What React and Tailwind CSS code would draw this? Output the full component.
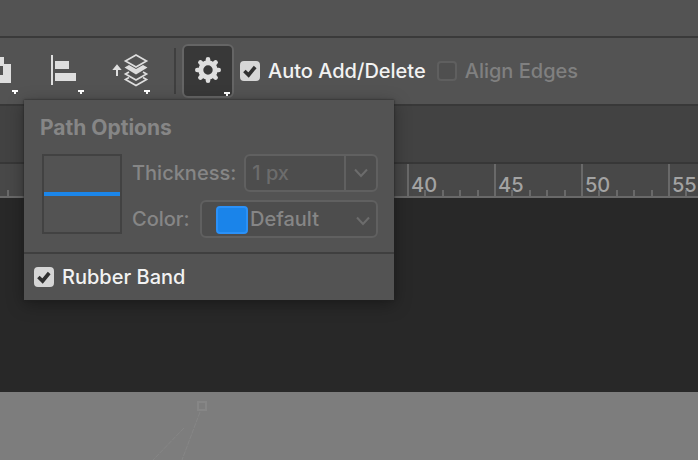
import { useState } from "react";

const rulerMarks = [
  { at: 15 },
  { at: 20 },
  { at: 25 },
  { at: 30 },
  { at: 35 },
  { at: 40, label: "40" },
  { at: 45, label: "45" },
  { at: 50, label: "50" },
  { at: 55, label: "55" },
];

const CheckBox = ({ id, label, checked, onChange, disabled }) => (
  <div className="flex shrink-0 items-center gap-2">
    <span className="relative flex h-5 w-5">
      <input
        id={id}
        type="checkbox"
        checked={checked}
        onChange={onChange}
        disabled={disabled}
        className="h-5 w-5 appearance-none rounded border-2 border-[#5f5f5f] bg-[#4f4f4f] checked:border-[#d6d6d6] checked:bg-[#d6d6d6]"
      />
      {checked && (
        <svg
          className="pointer-events-none absolute inset-0"
          width="20"
          height="20"
          viewBox="0 0 20 20"
          fill="none"
          stroke="#303030"
          strokeWidth="3.6"
        >
          <path d="M4.4 10L8.6 14L15.2 6" />
        </svg>
      )}
    </span>
    <label
      htmlFor={id}
      className={`whitespace-nowrap ${
        disabled ? "text-[#808080]" : "text-[#f2f2f2]"
      }`}
    >
      {label}
    </label>
  </div>
);

const Chevron = () => (
  <svg
    width="14"
    height="10"
    viewBox="0 0 14 10"
    fill="none"
    stroke="#6c6c6c"
    strokeWidth="2"
  >
    <path d="M1 1.5L7 8L13 1.5" />
  </svg>
);

const Ruler = () => (
  <div className="h-[34px] overflow-hidden border-b-2 border-[#696969] bg-[#484848]">
    <div className="-ml-7 flex h-full">
      {rulerMarks.map(({ at, label }) => (
        <div
          key={at}
          className="relative grid w-[87px] shrink-0 grid-cols-5 items-end"
        >
          <span className="h-full w-0.5 bg-[#696969]" />
          <span className="h-1.5 w-0.5 bg-[#696969]" />
          <span className="h-1.5 w-0.5 bg-[#696969]" />
          <span className="h-1.5 w-0.5 bg-[#696969]" />
          <span className="h-1.5 w-0.5 bg-[#696969]" />
          {label && (
            <span className="absolute top-[9px] left-1 leading-6 text-[#a3a3a3]">
              {label}
            </span>
          )}
        </div>
      ))}
    </div>
  </div>
);

const PathOptions = ({ rubberBand, setRubberBand }) => (
  <div className="absolute top-[62px] left-6 z-10 w-[370px] bg-[#535353] text-[#868686] shadow-[0_0_2px_#202020,0_4px_16px_rgba(0,0,0,0.35)]">
    <div className="border-b-2 border-[#3f3f3f] px-4 pt-4 pb-[14px]">
      <h2 className="text-[21px] leading-6 font-bold">Path Options</h2>
      <div className="mt-[14px] flex gap-[10px] pl-0.5">
        <div className="flex h-20 w-20 shrink-0 items-center border-2 border-[#424242]">
          <div className="h-1 w-full bg-[#1b86ea]" />
        </div>
        <div className="flex grow flex-col gap-2">
          <div className="flex h-[38px] items-center gap-2">
            <label htmlFor="thickness">Thickness:</label>
            <div className="flex h-full min-w-0 grow rounded-md border-2 border-[#606060] bg-[#4d4d4d]">
              <input
                id="thickness"
                type="text"
                defaultValue="1 px"
                disabled
                className="w-full min-w-0 grow pl-1.5 text-[#6c6c6c]"
              />
              <button
                type="button"
                aria-label="Thickness presets"
                disabled
                className="flex w-8 shrink-0 items-center justify-center border-l-2 border-[#606060]"
              >
                <Chevron />
              </button>
            </div>
          </div>
          <div className="flex h-[38px] items-center justify-between">
            <label htmlFor="color">Color:</label>
            <div className="relative h-full w-[178px]">
              <select
                id="color"
                disabled
                className="h-full w-full appearance-none rounded-md border-2 border-[#606060] bg-[#4d4d4d] pl-12 text-[#868686] opacity-100"
              >
                <option>Default</option>
              </select>
              <span className="pointer-events-none absolute top-1.5 left-4 h-7 w-8 rounded-sm border-2 border-[#2b91f8] bg-[#1a84ea]" />
              <span className="pointer-events-none absolute top-4 right-2">
                <Chevron />
              </span>
            </div>
          </div>
        </div>
      </div>
    </div>
    <div className="px-[10px] pt-[11px] pb-[11px]">
      <CheckBox
        id="rubber-band"
        label="Rubber Band"
        checked={rubberBand}
        onChange={(e) => setRubberBand(e.target.checked)}
      />
    </div>
  </div>
);

const App = () => {
  const [autoAdd, setAutoAdd] = useState(true);
  const [rubberBand, setRubberBand] = useState(true);
  const [showOptions, setShowOptions] = useState(true);

  return (
    <div className="flex min-h-screen flex-col overflow-hidden bg-[#282828] font-['Inter',sans-serif] text-[20px] leading-6 font-medium">
      <div className="h-[38px] border-b-2 border-[#3a3a3a] bg-[#535353]" />

      <div className="relative flex h-[68px] items-center border-b-2 border-[#383838] bg-[#535353]">
        <button type="button" aria-label="Path operations" className="shrink-0">
          <svg width="18" height="46" viewBox="0 0 18 46">
            <path d="M0 9h4v7h7v19H0v-8h3v-9H0z" fill="#dedede" />
            <path d="M12 42h6v2h-2v2h-2v-2h-2z" fill="#fff" />
          </svg>
        </button>
        <button
          type="button"
          aria-label="Path alignment"
          className="ml-[33px] shrink-0"
        >
          <svg width="33" height="46" viewBox="0 0 33 46">
            <path d="M0 7h2v30H0zM4 13h14v8H4zM4 25h21v8H4z" fill="#dedede" />
            <path d="M27 42h6v2h-2v2h-2v-2h-2z" fill="#fff" />
          </svg>
        </button>
        <button
          type="button"
          aria-label="Path arrangement"
          className="ml-7 shrink-0"
        >
          <svg width="38" height="46" viewBox="0 0 38 46">
            <path d="M5 16.3L9.7 22H6v6H4v-6H.3z" fill="#dedede" />
            <g fill="none" stroke="#dedede" strokeWidth="1.7">
              <path d="M24 7L34.5 13L24 19L13.5 13Z" />
              <path d="M17 24L13.5 26L24 32L34.5 26L31 24" />
              <path d="M17 29.5L13.5 31.5L24 37.5L34.5 31.5L31 29.5" />
            </g>
            <path
              d="M12.5 19.5L17 17L24 21L31 17L35.5 19.5L24 26.5Z"
              fill="#dedede"
            />
            <path d="M32 42h6v2h-2v2h-2v-2h-2z" fill="#fff" />
          </svg>
        </button>
        <div className="ml-6 h-[46px] w-0.5 shrink-0 bg-[#3f3f3f]" />
        <button
          type="button"
          aria-label="Path options"
          onClick={() => setShowOptions(!showOptions)}
          className="mr-1.5 ml-1.5 h-[54px] w-[52px] shrink-0 rounded-md border-2 border-[#656565] bg-[#383838]"
        >
          <svg width="48" height="50" viewBox="0 0 48 50">
            <g transform="translate(24 24)">
              <circle r="7.2" fill="none" stroke="#dedede" strokeWidth="5" />
              <g stroke="#dedede" strokeWidth="4.6" strokeLinecap="round">
                <path d="M0-9V-10.7M0 9V10.7M-9 0H-10.7M9 0H10.7" />
                <path d="M6.4-6.4L7.6-7.6M-6.4 6.4L-7.6 7.6M-6.4-6.4L-7.6-7.6M6.4 6.4L7.6 7.6" />
              </g>
            </g>
            <path d="M40 46h6v2h-2v2h-2v-2h-2z" fill="#fff" />
          </svg>
        </button>
        <div className="flex gap-[11px]">
          <CheckBox
            id="auto-add"
            label="Auto Add/Delete"
            checked={autoAdd}
            onChange={(e) => setAutoAdd(e.target.checked)}
          />
          <CheckBox
            id="align-edges"
            label="Align Edges"
            checked={false}
            disabled
          />
        </div>
        {showOptions && (
          <PathOptions rubberBand={rubberBand} setRubberBand={setRubberBand} />
        )}
      </div>

      <div className="h-[58px] border-b-2 border-[#373737] bg-[#424242]" />
      <Ruler />

      <div className="h-[194px] bg-[#282828]" />
      <div className="grow bg-[#7d7d7d]">
        <svg
          width="240"
          height="68"
          viewBox="0 0 240 68"
          fill="none"
          stroke="#868686"
        >
          <rect x="198" y="10" width="8" height="8" strokeWidth="2" />
          <path d="M200 20L182 68M184 36L153 68" strokeDasharray="5 1" />
        </svg>
      </div>
    </div>
  );
};

export default App;
